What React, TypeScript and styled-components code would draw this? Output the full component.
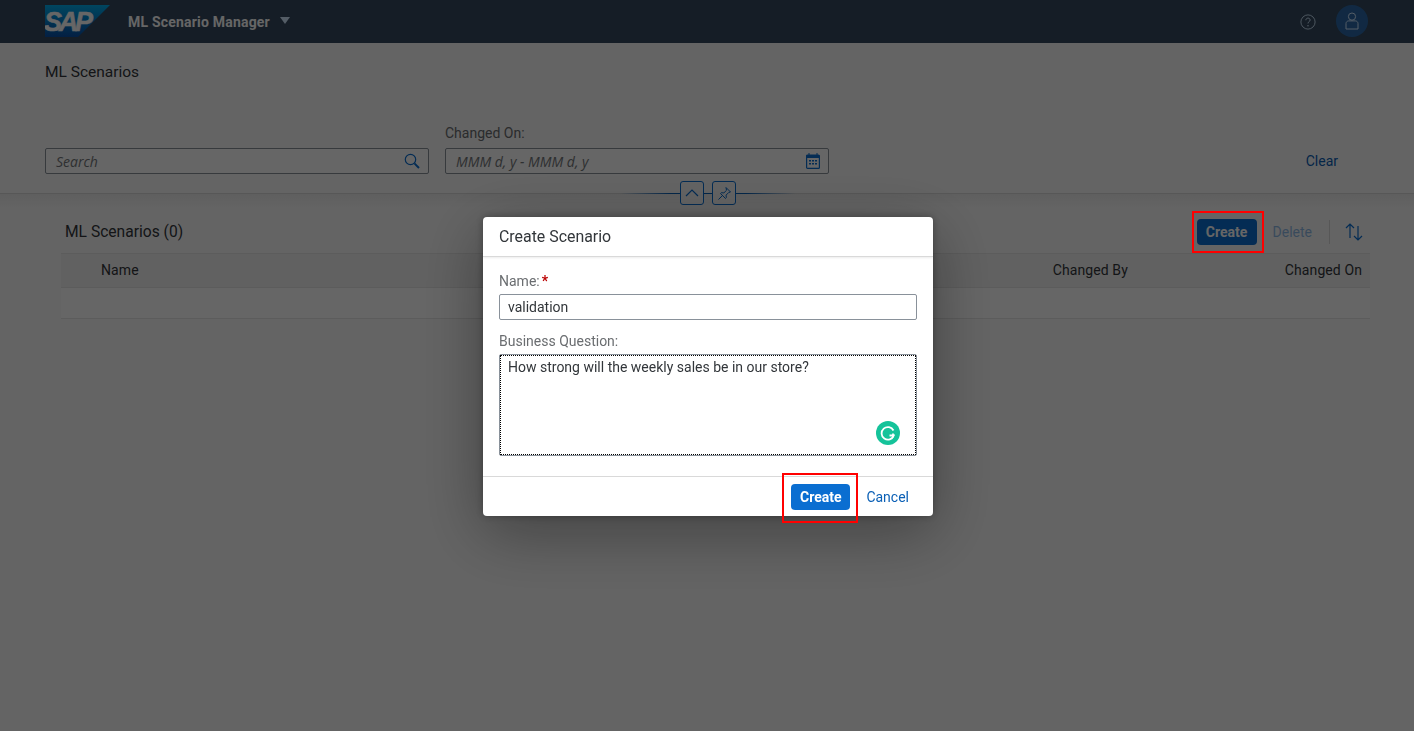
import React from "react";
import styled, { createGlobalStyle } from "styled-components";

const Global = createGlobalStyle`
  html, body { margin: 0; padding: 0; height: 100%; background: #fafafa; overflow: hidden; }
  body { font-family: Roboto, "Noto Sans", "Liberation Sans", sans-serif; font-size: 14px; color: #32363a; }
  * { box-sizing: border-box; }
`;

const Page = styled.div`
  width: 1414px; height: 731px; display: flex; flex-direction: column; background: #fafafa;
`;
const Shell = styled.header`
  height: 43px; flex: none; background: #354a5f; display: flex; align-items: center; padding: 0 46px 0 45px;
`;
const Logo = styled.svg`
  width: 65px; height: 32px; flex: none; margin-top: -1px;
`;
const AppTitle = styled.span`
  margin-left: 18px; font-size: 14px; font-weight: 700; letter-spacing: 0.2px; color: #fff; white-space: nowrap;
`;
const Caret = styled.span`
  margin-left: 10px; width: 0; height: 0; border-left: 5.5px solid transparent; border-right: 5.5px solid transparent; border-top: 7px solid #d1e8ff; margin-top: -3px;
`;
const ShellRight = styled.div`
  margin-left: auto; display: flex; align-items: center; gap: 20px;
`;
const Avatar = styled.div`
  width: 32px; height: 32px; border-radius: 50%; background: #2c68a8; display: flex; align-items: center; justify-content: center; margin-top: -2px;
`;
const FilterBar = styled.section`
  height: 151px; flex: none; padding: 0 76px 0 45px; display: flex; flex-direction: column; border-bottom: 1px solid #d9d9d9; position: relative;
`;
const PageTitle = styled.h1`
  margin: 18px 0 0; font-size: 15.5px; line-height: 22px; font-weight: 400; color: #32363a;
`;
const FilterRow = styled.div`
  margin-top: 41px; display: flex; align-items: flex-end; gap: 16px;
`;
const Field = styled.div`
  width: 384px; display: flex; flex-direction: column; gap: 6px;
`;
const Label = styled.label`
  font-size: 14px; line-height: 18px; color: #6a6d70; display: block;
`;
const InputBox = styled.div`
  height: 26px; border: 1px solid #89919a; border-radius: 2px; background: #fff; display: flex; align-items: center; justify-content: space-between; padding: 0 8px 0 10px;
`;
const Placeholder = styled.span`
  font-family: "Open Sans", sans-serif; font-style: italic; font-size: 14px; color: #74777a;
`;
const Clear = styled.span`
  margin-left: auto; color: #0a5fb5; font-size: 14px; line-height: 26px;
`;
const Collapse = styled.div`
  position: absolute; left: 620px; width: 176px; top: 138px; height: 24px; display: flex; align-items: center; justify-content: center; gap: 8px;
  background: linear-gradient(90deg, transparent 0, #0a5fb5 50px, #0a5fb5 126px, transparent 176px) center / 100% 1px no-repeat;
`;
const SmallBtn = styled.div`
  width: 24px; height: 24px; border: 1px solid #0a6ed1; border-radius: 3px; background: #fafafa; display: flex; align-items: center; justify-content: center;
`;
const Content = styled.section`
  flex: 1; padding: 0 44px 0 61px; background: linear-gradient(#ededed 0, #fafafa 14px);
`;
const Toolbar = styled.div`
  height: 59px; display: flex; align-items: center; padding: 16px 7px 0 4px;
`;
const TableTitle = styled.h2`
  margin: 0; font-size: 15.6px; font-weight: 400; color: #32363a;
`;
const ToolActions = styled.div`
  margin-left: auto; display: flex; align-items: center; position: relative;
`;
const Primary = styled.button<{ $w: number }>`
  height: 26px; border: 0; border-radius: 4px; background: #0a6ed1; color: #fff; font: 700 14px Roboto, sans-serif; display: flex; align-items: center; justify-content: center; padding: 0; width: ${(p) => p.$w}px;
`;
const Disabled = styled.span`
  margin-left: 16px; color: #0a6ed1; opacity: 0.45; font-size: 14px;
`;
const Sep = styled.span`
  width: 1px; height: 24px; background: #d9d9d9; margin: 0 15px 0 17px;
`;
const Highlight = styled.div<{ $l: number; $t: number; $w: number; $h: number }>`
  position: absolute; border: 2px solid #f00; z-index: 20; pointer-events: none;
  left: ${(p) => p.$l}px; top: ${(p) => p.$t}px; width: ${(p) => p.$w}px; height: ${(p) => p.$h}px;
`;
const HeadRow = styled.div`
  height: 35px; border-top: 1px solid #e5e5e5; border-bottom: 1px solid #e5e5e5; background: #f2f2f2; display: flex; align-items: center; padding: 0 8px 1px 40px;
`;
const HeadCell = styled.span<{ $ml?: number }>`
  font-size: 14px; letter-spacing: 0.1px; color: #32363a; margin-left: ${(p) => p.$ml || 0}px;
`;
const HeadEnd = styled(HeadCell)`
  margin-left: auto;
`;
const EmptyRow = styled.div`
  height: 31px; border-bottom: 1px solid #e5e5e5; background: #fff;
`;
const Overlay = styled.div`
  position: fixed; inset: 0; background: rgba(0,0,0,0.6); z-index: 10; display: flex; align-items: center; justify-content: center; padding: 2px 0 0 2px;
`;
const Dialog = styled.div`
  width: 450px; height: 299px; background: #fff; border-radius: 4px; display: flex; flex-direction: column; position: relative;
  box-shadow: 0 16px 64px rgba(0,0,0,0.36), 0 0 8px rgba(0,0,0,0.3);
`;
const DialogHead = styled.div`
  height: 40px; flex: none; padding: 0 16px; display: flex; align-items: center; font-size: 15.9px; color: #32363a; border-bottom: 1px solid #d9d9d9; box-shadow: 0 1px 2px rgba(0,0,0,0.08);
`;
const DialogBody = styled.div`
  flex: 1; padding: 15px 16px 0; display: flex; flex-direction: column;
`;
const Req = styled.span`
  color: #bb0000; font-weight: 700; margin-left: 2px;
`;
const TextInput = styled.div`
  height: 26px; margin-top: 4px; border: 1px solid #89919a; border-radius: 2px; padding: 0 8px; display: flex; align-items: center; font-size: 14px; color: #32363a;
`;
const SecondLabel = styled(Label)`
  margin-top: 12px;
`;
const TextArea = styled.div`
  height: 102px; margin-top: 4px; border: 1px solid #89919a; outline: 1px dotted #000; outline-offset: -2px; border-radius: 2px; padding: 3px 8px; font-size: 14px; line-height: 18px; color: #32363a; position: relative;
`;
const Grammarly = styled.svg`
  position: absolute; right: 16px; bottom: 10px; width: 24px; height: 24px;
`;
const DialogFoot = styled.div`
  height: 40px; flex: none; border-top: 1px solid #d9d9d9; display: flex; align-items: center; justify-content: flex-end; padding: 0 24px 0 0; position: relative; margin-top: auto;
`;
const Ghost = styled.span`
  margin-left: 16px; color: #0a5fb5; font-size: 14px;
`;

const Stroke = { fill: "none", stroke: "#0a6ed1", strokeWidth: 1.2 };

export default function App() {
  return (
    <>
      <Global />
      <Page>
        <Shell>
          <Logo viewBox="0 0 65 32">
            <defs>
              <linearGradient id="sapg" x1="0" y1="0" x2="0" y2="1">
                <stop offset="0" stopColor="#00aeef" />
                <stop offset="1" stopColor="#0a4fa8" />
              </linearGradient>
            </defs>
            <polygon points="0,0 65,0 33,32 0,32" fill="url(#sapg)" />
            <text x="-1" y="26" fontFamily="Liberation Sans, sans-serif" fontWeight="700" fontStyle="italic" fontSize="27" letterSpacing="-3.2" fill="#fff" stroke="#fff" strokeWidth=".5">SAP</text>
          </Logo>
          <AppTitle>ML Scenario Manager</AppTitle>
          <Caret />
          <ShellRight>
            <svg width="16" height="16" viewBox="0 0 18 18">
              <circle cx="9" cy="9" r="8" fill="none" stroke="#d1e8ff" strokeWidth="1" />
              <path d="M6.6 7c0-1.5 1.1-2.4 2.4-2.4s2.4.9 2.4 2.2c0 1.8-2.4 1.8-2.4 3.8" fill="none" stroke="#d1e8ff" strokeWidth="1.1" />
              <circle cx="9" cy="13.2" r=".8" fill="#d1e8ff" />
            </svg>
            <Avatar>
              <svg width="14" height="18" viewBox="0 0 14 18">
                <circle cx="7" cy="4.6" r="3.6" fill="none" stroke="#d1e8ff" strokeWidth="1" />
                <path d="M1 17V11.5c0-1.4 1.2-2.6 2.6-2.6h6.8c1.4 0 2.6 1.2 2.6 2.6V17Z" fill="none" stroke="#d1e8ff" strokeWidth="1" />
              </svg>
            </Avatar>
          </ShellRight>
        </Shell>
        <FilterBar>
          <PageTitle>ML Scenarios</PageTitle>
          <FilterRow>
            <Field>
              <InputBox>
                <Placeholder>Search</Placeholder>
                <svg width="16" height="16" viewBox="0 0 16 16">
                  <circle cx="6.5" cy="6.5" r="5.2" {...Stroke} />
                  <path d="M10.4 10.4 15 15" fill="none" stroke="#0a6ed1" strokeWidth="2" />
                </svg>
              </InputBox>
            </Field>
            <Field>
              <Label>Changed On:</Label>
              <InputBox>
                <Placeholder>MMM d, y - MMM d, y</Placeholder>
                <svg width="14" height="16" viewBox="0 0 14 16">
                  <rect x=".6" y="2" width="12.8" height="13.4" rx="1" fill="none" stroke="#0a6ed1" strokeWidth="1.2" />
                  <rect x=".6" y="2" width="12.8" height="3" fill="#0a6ed1" />
                  <path d="M3 0v2M11 0v2" stroke="#0a6ed1" />
                  <path d="M3 7h2v1.5H3zM6 7h2v1.5H6zM9 7h2v1.5H9zM3 10h2v1.5H3zM6 10h2v1.5H6zM9 10h2v1.5H9z" fill="#0a6ed1" />
                </svg>
              </InputBox>
            </Field>
            <Clear>Clear</Clear>
          </FilterRow>
          <Collapse>
            <SmallBtn>
              <svg width="14" height="8" viewBox="0 0 14 8"><path d="M1 7 7 1l6 6" {...Stroke} /></svg>
            </SmallBtn>
            <SmallBtn>
              <svg width="15" height="15" viewBox="0 0 15 15">
                <path d="M9 1.5 13.5 6l-1.8.5-2.6 2.6.2 2.6-.8.8L3.5 7.5l.8-.8 2.6.2 2.6-2.6ZM5.8 9.2 1.5 13.5" fill="none" stroke="#0a6ed1" strokeWidth="1" />
              </svg>
            </SmallBtn>
          </Collapse>
        </FilterBar>
        <Content>
          <Toolbar>
            <TableTitle>ML Scenarios (0)</TableTitle>
            <ToolActions>
              <Primary $w={60}>Create</Primary>
              <Highlight $l={-5} $t={-8} $w={72} $h={42} />
              <Disabled>Delete</Disabled>
              <Sep />
              <svg width="18" height="18" viewBox="0 0 18 18">
                <path d="M5 15V1M1 5l4-4 4 4M13 3v14M9 13l4 4 4-4" {...Stroke} />
              </svg>
            </ToolActions>
          </Toolbar>
          <HeadRow>
            <HeadCell>Name</HeadCell>
            <HeadCell $ml={914}>Changed By</HeadCell>
            <HeadEnd>Changed On</HeadEnd>
          </HeadRow>
          <EmptyRow />
        </Content>
      </Page>
      <Overlay>
        <Dialog>
          <DialogHead>Create Scenario</DialogHead>
          <DialogBody>
            <Label>Name:<Req>*</Req></Label>
            <TextInput>validation</TextInput>
            <SecondLabel>Business Question:</SecondLabel>
            <TextArea>
              How strong will the weekly sales be in our store?
              <Grammarly viewBox="0 0 24 24">
                <circle cx="12" cy="12" r="12" fill="#15c39a" />
                <path d="M17.5 9.5A6.3 6.3 0 1 0 17.8 14.5H13.5" fill="none" stroke="#fff" strokeWidth="1.8" />
                <path d="M17 16.5V12.6" fill="none" stroke="#fff" strokeWidth="1.8" />
              </Grammarly>
            </TextArea>
          </DialogBody>
          <DialogFoot>
            <Primary $w={59}>Create</Primary>
            <Ghost>Cancel</Ghost>
            <Highlight $l={299} $t={-4} $w={76} $h={50} />
          </DialogFoot>
        </Dialog>
      </Overlay>
    </>
  );
}
